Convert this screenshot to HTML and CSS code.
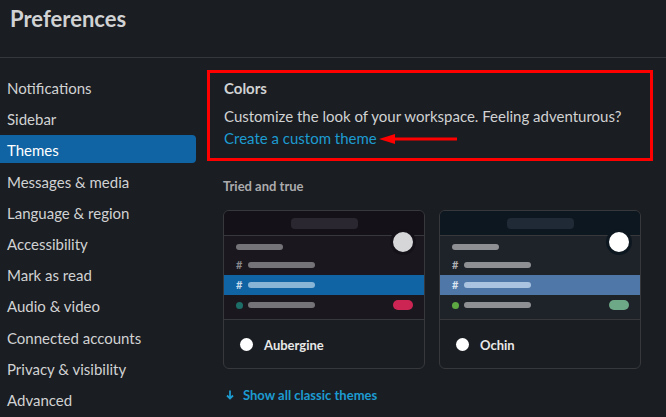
FILE: index.html
```html
<!DOCTYPE html>
<html>
    <head>
        <title>Preferences</title>
        <meta name="viewport" content="width=device-width, initial-scale=1.0">
        <link rel="stylesheet" href="styles.css">
    </head>
    <body>
        <header class="top">
            <h1>Preferences</h1>
        </header>

        <div class="main">
            <nav class="side">
                <a class="item">Notifications</a>
                <a class="item">Sidebar</a>
                <a class="item active">Themes</a>
                <a class="item">Messages &amp; media</a>
                <a class="item">Language &amp; region</a>
                <a class="item">Accessibility</a>
                <a class="item">Mark as read</a>
                <a class="item">Audio &amp; video</a>
                <a class="item">Connected accounts</a>
                <a class="item">Privacy &amp; visibility</a>
                <a class="item">Advanced</a>
            </nav>

            <div class="content">
                <!-- red box is the screenshot's annotation -->
                <section class="colors">
                    <h2>Colors</h2>
                    <p>Customize the look of your workspace. Feeling adventurous?</p>
                    <p class="linkline">
                        <a class="link">Create a custom theme</a>
                        <svg class="callout" width="80" height="12" viewBox="0 0 80 12">
                            <polygon points="0,6 16,1 16,11" fill="#f00"/>
                            <rect x="15" y="4.5" width="63" height="3" fill="#f00"/>
                        </svg>
                    </p>
                </section>

                <h3 class="group">Tried and true</h3>

                <div class="cards">
                    <div class="card aubergine">
                        <div class="preview">
                            <div class="bar"><span class="search"></span></div>
                            <span class="avatar"></span>
                            <div class="rows">
                                <div class="row first"><span class="pill short"></span></div>
                                <div class="row"><span class="hash">#</span><span class="pill"></span></div>
                                <div class="row sel"><span class="hash">#</span><span class="pill"></span></div>
                                <div class="row"><span class="dot"></span><span class="pill"></span><span class="badge"></span></div>
                            </div>
                        </div>
                        <label class="pick"><span class="radio"></span>Aubergine</label>
                    </div>

                    <div class="card ochin">
                        <div class="preview">
                            <div class="bar"><span class="search"></span></div>
                            <span class="avatar"></span>
                            <div class="rows">
                                <div class="row first"><span class="pill short"></span></div>
                                <div class="row"><span class="hash">#</span><span class="pill"></span></div>
                                <div class="row sel"><span class="hash">#</span><span class="pill"></span></div>
                                <div class="row"><span class="dot"></span><span class="pill"></span><span class="badge"></span></div>
                            </div>
                        </div>
                        <label class="pick"><span class="radio"></span>Ochin</label>
                    </div>
                </div>

                <a class="more">
                    <svg width="8" height="10" viewBox="0 0 8 10">
                        <path d="M4 0.5 V8.5 M1 5.5 L4 8.5 L7 5.5" stroke="#1d9bd1" stroke-width="1.8" fill="none"/>
                    </svg>
                    Show all classic themes
                </a>
            </div>
        </div>
    </body>
</html>
```

FILE: styles.css
```css
*{
    margin: 0;
    padding: 0;
    box-sizing: border-box;
}

body{
    width: 666px;
    height: 417px;
    overflow: hidden;
    background-color: #1a1d21;
    color: #d1d2d3;
    font-family: Lato, "Liberation Sans", sans-serif;
}

.top{
    height: 58px;
    padding: 4px 10px 0;
    border-bottom: 1px solid #35373b;
}

h1{
    font-size: 22px;
    line-height: 30px;
    font-weight: 700;
    color: #d1d2d3;
}

.main{
    display: flex;
}

.side{
    width: 196px;
    flex-shrink: 0;
    padding-top: 15px;
    display: flex;
    flex-direction: column;
    gap: 3.2px;
}

.item{
    height: 28px;
    line-height: 30px;
    padding-left: 7px;
    font-size: 15px;
    border-radius: 0 4px 4px 0;
}

.item.active{
    background-color: #1164a3;
    color: #fff;
}

.content{
    flex: 1;
    padding: 12px 0 0 27px;
}

.colors{
    width: 446px;
    margin-left: -16px;
    border: 3px solid #f00;
    padding: 4px 14px 9px;
    font-size: 15px;
    line-height: 22px;
}

h2{
    font-size: 15px;
    font-weight: 700;
    margin-bottom: 6px;
}

.linkline{
    display: flex;
    align-items: center;
}

.link{
    color: #1d9bd1;
}

.callout{
    margin-left: 2px;
    margin-top: 1px;
}

.group{
    margin-top: 16px;
    font-size: 13px;
    line-height: 18px;
    font-weight: 700;
    color: #ababad;
}

.cards{
    display: flex;
    gap: 14px;
    margin-top: 15px;
}

.card{
    position: relative;
    width: 202px;
    border: 1px solid #36383c;
    border-radius: 6px;
    overflow: hidden;
}

.bar{
    height: 25px;
    border-bottom: 1px solid #36383c;
    display: flex;
    align-items: center;
    justify-content: center;
}

.search{
    width: 67px;
    height: 11px;
    border-radius: 4px;
}

.avatar{
    position: absolute;
    left: 166px;
    top: 18px;
    width: 26px;
    height: 26px;
    border-radius: 50%;
    border: 3px solid;
}

.rows{
    padding-bottom: 4px;
    border-bottom: 1px solid #36383c;
}

.row{
    height: 20px;
    display: flex;
    align-items: center;
    padding: 0 11px 0 12px;
}

.row.first{
    height: 19px;
    align-items: flex-end;
    padding-bottom: 5px;
}

.pill{
    width: 67px;
    height: 6px;
    border-radius: 3px;
}

.pill.short{
    width: 47px;
}

.hash{
    width: 12px;
    font-size: 11px;
    font-weight: 700;
    line-height: 12px;
}

.dot{
    width: 7px;
    height: 7px;
    border-radius: 50%;
    margin-right: 5px;
}

.badge{
    margin-left: auto;
    width: 20px;
    height: 10px;
    border-radius: 5px;
}

.pick{
    height: 48px;
    display: flex;
    align-items: center;
    padding: 1px 0 0 16px;
    gap: 11px;
    font-size: 13px;
    font-weight: 700;
    color: #e8e8e8;
}

.radio{
    width: 13px;
    height: 13px;
    border-radius: 50%;
    background-color: #fff;
}

/* aubergine theme preview */
.aubergine .bar{ background-color: #141218; }
.aubergine .search{ background-color: #2a2730; }
.aubergine .rows{ background-color: #1a181e; }
.aubergine .avatar{ background-color: #d6d6d8; border-color: #141218; }
.aubergine .pill{ background-color: #747377; }
.aubergine .hash{ color: #8a898d; }
.aubergine .sel{ background-color: #1164a3; }
.aubergine .sel .pill{ background-color: #88b4d6; }
.aubergine .sel .hash{ color: #c9dcec; }
.aubergine .dot{ background-color: #1d6e69; }
.aubergine .badge{ background-color: #cd2553; }

/* ochin theme preview */
.ochin .bar{ background-color: #0d1720; }
.ochin .search{ background-color: #1f2a36; }
.ochin .rows{ background-color: #1e2229; }
.ochin .avatar{ background-color: #fff; border-color: #0d1720; }
.ochin .pill{ background-color: #8e8f93; }
.ochin .hash{ color: #b0b1b4; }
.ochin .sel{ background-color: #4f77a8; }
.ochin .sel .pill{ background-color: #a9c3e0; }
.ochin .sel .hash{ color: #dbe5f1; }
.ochin .dot{ background-color: #5ea843; }
.ochin .badge{ background-color: #6da887; }

.more{
    display: flex;
    align-items: center;
    gap: 9px;
    margin-top: 16px;
    padding-left: 3px;
    font-size: 13px;
    line-height: 20px;
    font-weight: 700;
    color: #1d9bd1;
}
```
